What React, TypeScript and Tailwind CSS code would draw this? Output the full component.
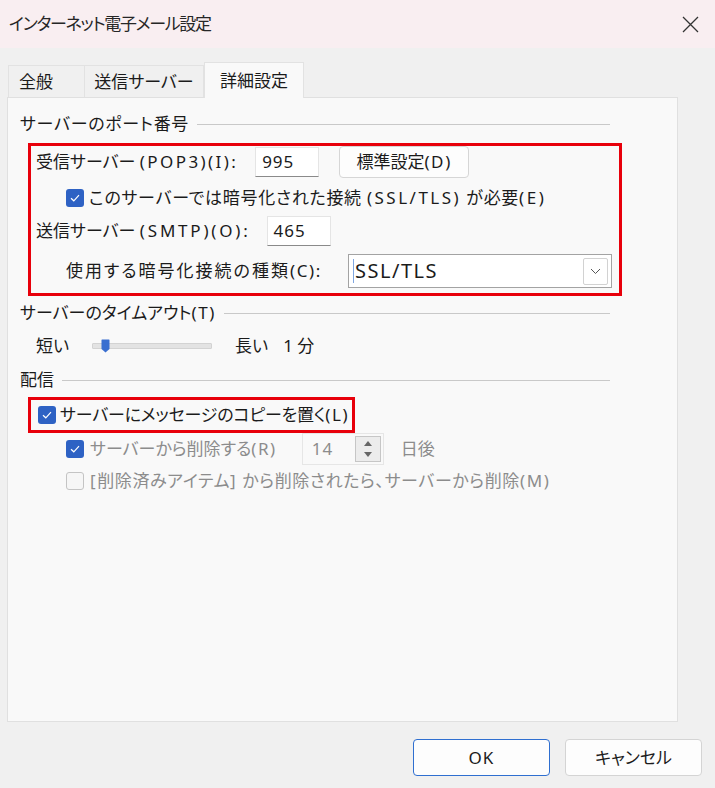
import React from 'react'

// latin runs are wider in the original UI font; l / c tune latin and cjk runs per line
function T({ children, l = 'tracking-[1.6px]', c = '' }: { children: string; l?: string; c?: string }) {
  const parts = children.split(/([\x21-\x7e][\x20-\x7e]*[\x21-\x7e]|[\x21-\x7e])/)
  return (
    <span className="whitespace-nowrap">
      {parts.map((p, i) =>
        /[\x21-\x7e]/.test(p) ? (
          <span key={i} className={l}>{p}</span>
        ) : (
          <span key={i} className={c}>{p}</span>
        )
      )}
    </span>
  )
}

function Check({ on = true }: { on?: boolean }) {
  if (!on)
    return (
      <span className="w-[18px] h-[18px] rounded-[3px] border border-[#c4c4c4] bg-[#f6f6f6] shrink-0" />
    )
  return (
    <span className="w-[18px] h-[18px] rounded-[3px] bg-[#2e62c4] grid place-items-center shrink-0">
      <svg width="10" height="8" viewBox="0 0 10 8">
        <path d="M1 4.2 L3.8 6.8 L9 1.2" fill="none" stroke="white" strokeWidth="1.2" />
      </svg>
    </span>
  )
}

function SectionHead({ label, c = '' }: { label: string; c?: string }) {
  return (
    <div className="h-[24px] w-[590px] flex items-center">
      <T c={c}>{label}</T>
      <div className="flex-1 h-px bg-[#c9c9c9] ml-[8px]" />
    </div>
  )
}

export default function App() {
  return (
    <div className="w-[715px] h-[788px] bg-[#f0f0f0] flex flex-col text-[#1b1b1b] text-[17px] font-['Noto_Sans','Noto_Sans_CJK_JP',sans-serif] [font-feature-settings:'palt']">
      {/* title bar */}
      <div className="h-[48px] bg-[#f9eef1] flex items-center justify-between pl-[9px] pr-[16px]">
        <span className="text-[17px] tracking-[-1.3px] text-[#262626]">インターネット電子メール設定</span>
        <svg width="17" height="17" viewBox="0 0 17 17">
          <path d="M1 1 L16 16 M16 1 L1 16" stroke="#333" strokeWidth="1.3" />
        </svg>
      </div>

      {/* tabs */}
      <div className="mt-[14px] flex items-end pl-[8px] h-[35px]">
        <div className="h-[32px] w-[77px] border border-b-0 border-[#e2e2e2] flex items-center pl-[10px]">全般</div>
        <div className="h-[32px] w-[119px] border border-b-0 border-l-0 border-[#e2e2e2] flex items-center justify-center">送信サーバー</div>
        <div className="h-[36px] w-[100px] -mb-px relative z-10 bg-[#f9f9f9] border border-b-0 border-[#e2e2e2] flex items-center justify-center">詳細設定</div>
      </div>

      {/* panel */}
      <div className="ml-[7px] w-[671px] h-[625px] bg-[#f9f9f9] border border-[#e0e0e0] pt-[14px] pl-[12px] flex flex-col">
        <SectionHead label="サーバーのポート番号" c="tracking-[0.7px]" />

        <div className="mt-[7px] ml-[8px] w-[594px] h-[153px] border-[3px] border-[#e8000b] pl-[5px] flex flex-col">
          <div className="h-[32px] flex items-center">
            <T l="tracking-[2.4px]">受信サーバー (POP3)(I):</T>
            <div className="ml-[17px] w-[64px] h-[30px] bg-white border border-[#e5e5e5] border-b-[#8a8a8a] flex items-center pl-[6px] tracking-[1px]">995</div>
            <div className="ml-[20px] w-[130px] h-[32px] bg-[#fdfdfd] border border-[#d6d6d6] rounded-[4px] flex items-center justify-center">
              <T>標準設定(D)</T>
            </div>
          </div>
          <div className="mt-[9px] h-[22px] flex items-center pl-[30px] gap-[5px]">
            <Check />
            <T l="tracking-[2.5px]" c="tracking-[0.7px]">このサーバーでは暗号化された接続 (SSL/TLS) が必要(E)</T>
          </div>
          <div className="mt-[7px] h-[30px] flex items-center">
            <T l="tracking-[2.8px]">送信サーバー (SMTP)(O):</T>
            <div className="ml-[16px] w-[64px] h-[30px] bg-white border border-[#e5e5e5] border-b-[#8a8a8a] flex items-center pl-[6px] tracking-[1px]">465</div>
          </div>
          <div className="mt-[8px] h-[34px] flex items-center pl-[30px]">
            <T c="tracking-[2px]">使用する暗号化接続の種類(C):</T>
            <div className="ml-auto mr-[7px] w-[264px] h-[34px] bg-white border border-[#a3a3a3] flex items-center pl-[4px] pr-[3px]">
              <span className="flex-1 text-[20px] tracking-[1.5px] border-l border-[#7fa6e0] pl-[1px] leading-[24px]">SSL/TLS</span>
              <div className="w-[25px] h-[27px] border border-[#d2d2d2] rounded-[2px] grid place-items-center">
                <svg width="11" height="7" viewBox="0 0 11 7">
                  <path d="M1 1 L5.5 5.5 L10 1" fill="none" stroke="#555" strokeWidth="1" />
                </svg>
              </div>
            </div>
          </div>
        </div>

        <div className="mt-[5px]">
          <SectionHead label="サーバーのタイムアウト(T)" />
        </div>
        <div className="mt-[9px] h-[24px] flex items-center pl-[16px]">
          <span>短い</span>
          <div className="ml-[23px] w-[120px] h-[14px] relative flex items-center">
            <div className="w-full h-[6px] bg-[#e3e3e3] border border-[#d3d3d3] rounded-[1px]" />
            <svg className="absolute left-[9px] top-0" width="9" height="14" viewBox="0 0 9 14">
              <path d="M0.5 1 Q0.5 0.5 1 0.5 L8 0.5 Q8.5 0.5 8.5 1 L8.5 10 L4.5 13.5 L0.5 10 Z" fill="#3a6fd0" />
            </svg>
          </div>
          <span className="ml-[23px]">長い</span>
          <span className="ml-[15px]">1 分</span>
        </div>

        <div className="mt-[10px]">
          <SectionHead label="配信" />
        </div>
        <div className="mt-[5px] ml-[8px] w-[327px] h-[36px] border-[3px] border-[#e8000b] flex items-center pl-[7px] gap-[4px]">
          <Check />
          <T c="tracking-[-0.2px]">サーバーにメッセージのコピーを置く(L)</T>
        </div>
        <div className="h-[32px] flex items-center pl-[46px] text-[#8c8c8c]">
          <Check />
          <span className="ml-[6px]">
            <T>サーバーから削除する(R)</T>
          </span>
          <div className="ml-[25px] w-[82px] h-[32px] bg-[#f9f9f9] border border-[#e6e6e6] flex items-center pl-[9px] pr-[2px]">
            <span className="flex-1 tracking-[1px]">14</span>
            <div className="w-[26px] h-[26px] border border-[#c6c6c6] bg-[#ececec] flex flex-col items-center justify-center gap-[6px]">
              <svg width="8" height="5" viewBox="0 0 8 5"><path d="M0 5 L4 0 L8 5 Z" fill="#666" /></svg>
              <svg width="8" height="5" viewBox="0 0 8 5"><path d="M0 0 L4 5 L8 0 Z" fill="#666" /></svg>
            </div>
          </div>
          <span className="ml-[17px]">日後</span>
        </div>
        <div className="mt-[4px] h-[24px] flex items-center pl-[46px] text-[#8c8c8c]">
          <Check on={false} />
          <span className="ml-[6px]">
            <T c="tracking-[0.6px]">[削除済みアイテム] から削除されたら、サーバーから削除(M)</T>
          </span>
        </div>
      </div>

      {/* buttons */}
      <div className="mt-[17px] flex justify-end pr-[13px] gap-[15px]">
        <div className="w-[137px] h-[37px] bg-[#fdfdfd] border-[1.5px] border-[#2f6fd0] rounded-[4px] flex items-center justify-center tracking-[1px]">OK</div>
        <div className="w-[137px] h-[37px] bg-[#fdfdfd] border border-[#d4d4d4] rounded-[4px] flex items-center justify-center">キャンセル</div>
      </div>
    </div>
  )
}
